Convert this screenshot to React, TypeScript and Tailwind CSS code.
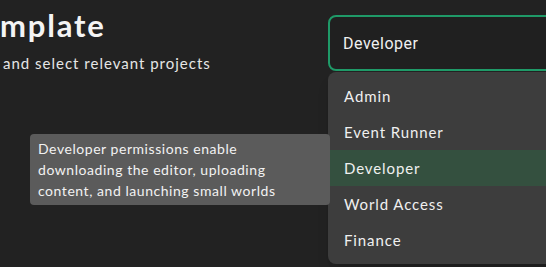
import React from "react";

const roles = ["Admin", "Event Runner", "Developer", "World Access", "Finance"];

export default function App() {
  const selected = "Developer";

  return (
    <div className="relative h-[267px] w-[546px] overflow-hidden bg-[#222222] font-['Lato',sans-serif] text-white">
      <div className="flex">
        {/* Heading */}
        <div className="w-[328px] shrink-0">
          <h1 className="mt-[5px] text-[31px] font-bold leading-[40px] tracking-[1.8px] text-[#f4f4f4]">
            mplate
          </h1>
          <p className="mt-[8px] pl-[3px] text-[15px] leading-[20px] tracking-[1px] text-[#e6e6e6]">
            and select relevant projects
          </p>
        </div>

        {/* Role select */}
        <div className="relative mt-[15px] w-[240px] shrink-0">
          <div className="flex h-[56px] items-center rounded-[8px] border-2 border-[#1f9a68] bg-[#202020] pl-[13px] pt-[1px] font-['Roboto',sans-serif] text-[16px] tracking-[0.5px] text-[#f0f0f0]">
            {selected}
          </div>

          {/* Options */}
          <ul className="absolute left-0 top-[57px] w-full rounded-[8px] bg-[#3d3d3d] py-[6px] shadow-lg">
            {roles.map((r) => (
              <li
                key={r}
                className={`flex h-[36px] items-center pl-[16px] text-[15px] tracking-[0.9px] text-[#f0f0f0] ${
                  r === selected ? "bg-[#34503f]" : ""
                }`}
              >
                {r}
              </li>
            ))}
          </ul>
        </div>
      </div>

      {/* Tooltip */}
      <div className="absolute left-[30px] top-[134px] w-[300px] rounded-[4px] bg-[#5b5b5b] px-[8px] py-[4px] text-[14px] leading-[21px] tracking-[0.55px] text-[#f2f2f2]">
        Developer permissions enable
        <br />
        downloading the editor, uploading
        <br />
        content, and launching small worlds
      </div>
    </div>
  );
}
